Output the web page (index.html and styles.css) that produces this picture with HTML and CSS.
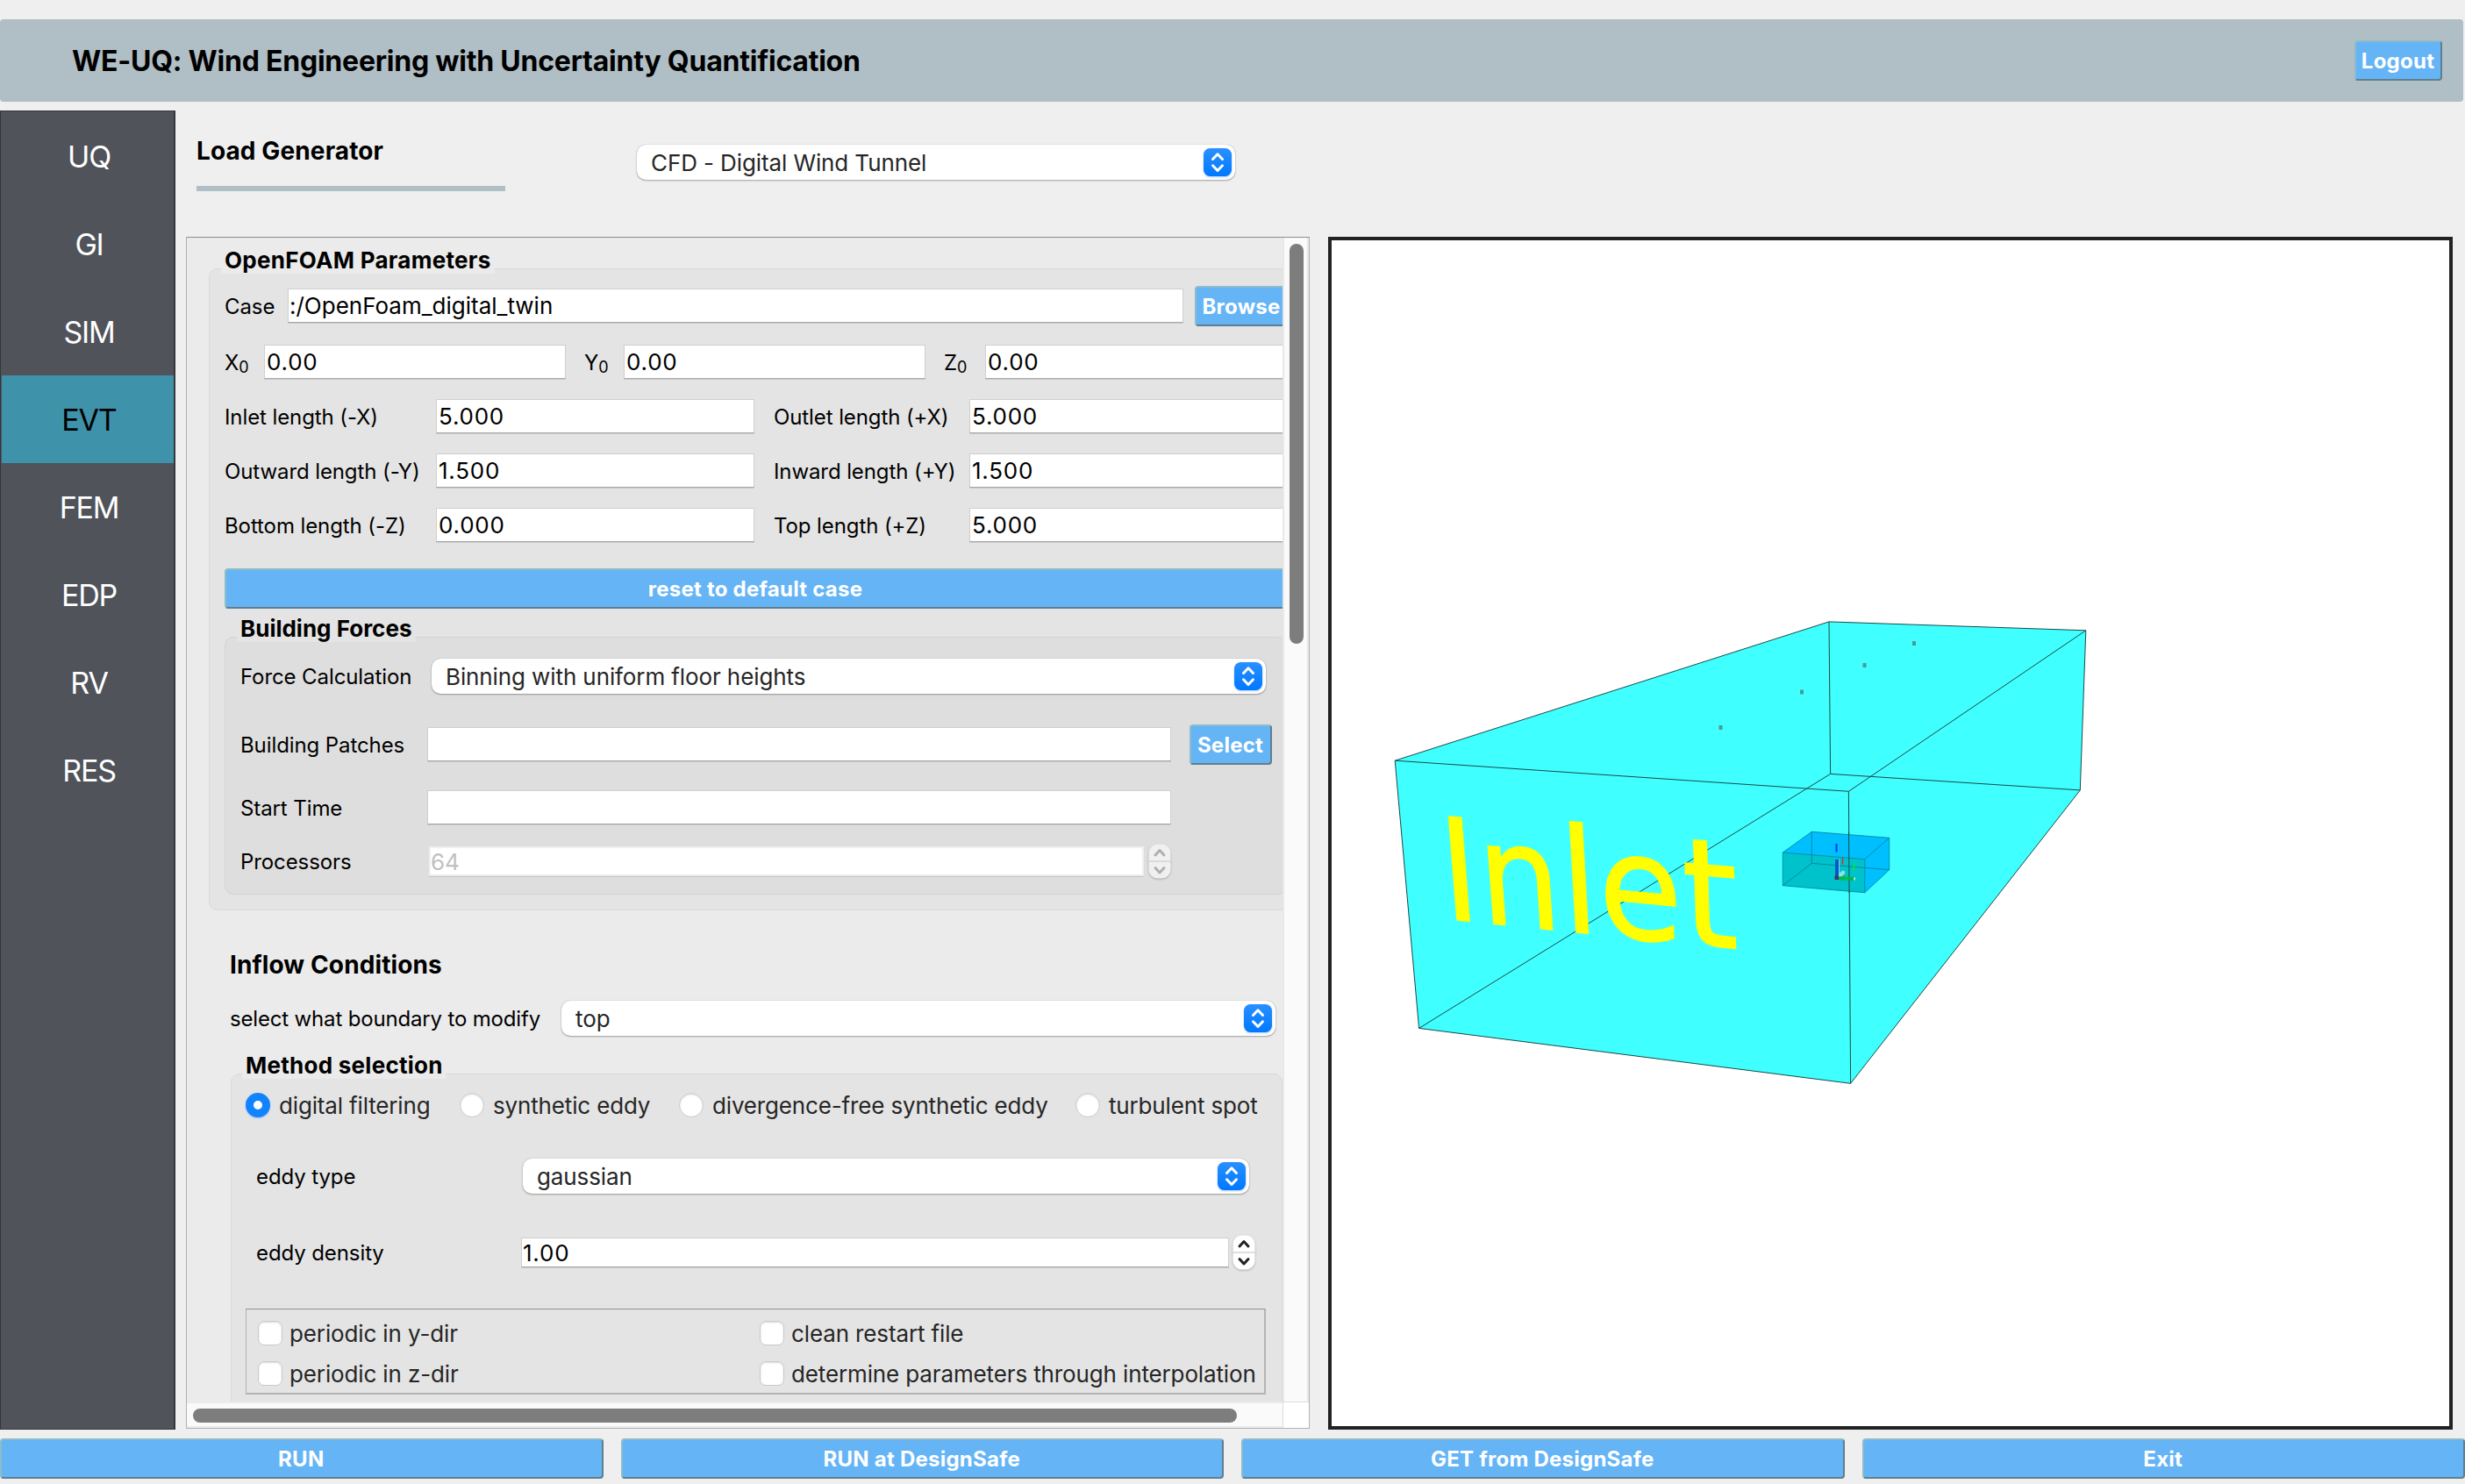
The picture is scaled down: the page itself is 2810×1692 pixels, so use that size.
FILE: index.html
```html
<!DOCTYPE html>
<html lang="en">
<head>
<meta charset="utf-8">
<title>WE-UQ</title>
<link rel="stylesheet" href="styles.css">
</head>
<body>
<svg class="defs" width="0" height="0">
  <defs>
    <linearGradient id="blue" x1="0" y1="0" x2="0" y2="1"><stop offset="0" stop-color="#2a90ff"/><stop offset="1" stop-color="#0078ff"/></linearGradient>
    <symbol id="arrows" viewBox="0 0 32 32">
      <rect width="32" height="32" rx="7.5" fill="url(#blue)"/>
      <path d="M10.5 12.5 16 6.8l5.500 5.700M10.500 19.800 16 25.500l5.500-5.700" fill="none" stroke="#fff" stroke-width="3" stroke-linecap="round" stroke-linejoin="round"/>
    </symbol>
    <symbol id="stepper" viewBox="0 0 26 40">
      <rect x=".5" y=".5" width="25" height="39" rx="10" fill="currentColor"/>
      <path d="M0 20h26" stroke="#d4d4d4" stroke-width="1.500"/>
      <path d="M8 13l5-5.500 5 5.500M8 27.500l5 5.500 5-5.500" fill="none" stroke="var(--arrow)" stroke-width="3" stroke-linecap="round" stroke-linejoin="round"/>
    </symbol>
  </defs>
</svg>

<header class="header">
  <h1>WE-UQ: Wind Engineering with Uncertainty Quantification</h1>
  <button class="btn logout">Logout</button>
</header>

<div class="body">
  <nav class="sidebar">
    <a>UQ</a><a>GI</a><a>SIM</a><a class="active">EVT</a><a>FEM</a><a>EDP</a><a>RV</a><a>RES</a>
  </nav>
  <main class="main">
    <div class="topbar">
      <h2>Load Generator</h2>
      <div class="combo">CFD - Digital Wind Tunnel<svg><use href="#arrows"/></svg></div>
    </div>
    <div class="work">
      <section class="panel">
        <div class="content">
          <div class="group openfoam">
            <h3>OpenFOAM Parameters</h3>
            <div class="row case"><label>Case</label><div class="input">:/OpenFoam_digital_twin</div><button class="btn">Browse</button></div>
            <div class="row origin">
              <label>X<sub>0</sub></label><div class="input num">0.00</div>
              <label>Y<sub>0</sub></label><div class="input num">0.00</div>
              <label>Z<sub>0</sub></label><div class="input num">0.00</div>
            </div>
            <div class="row lengths"><label>Inlet length (-X)</label><div class="input num">5.000</div><label>Outlet length (+X)</label><div class="input num">5.000</div></div>
            <div class="row lengths"><label>Outward length (-Y)</label><div class="input num">1.500</div><label>Inward length (+Y)</label><div class="input num">1.500</div></div>
            <div class="row lengths"><label>Bottom length (-Z)</label><div class="input num">0.000</div><label>Top length (+Z)</label><div class="input num">5.000</div></div>
            <button class="btn reset">reset to default case</button>
            <div class="group forces">
              <h3>Building Forces</h3>
              <div class="row calc"><label>Force Calculation</label><div class="combo">Binning with uniform floor heights<svg><use href="#arrows"/></svg></div></div>
              <div class="row patches"><label>Building Patches</label><div class="input"></div><button class="btn">Select</button></div>
              <div class="row start"><label>Start Time</label><div class="input"></div></div>
              <div class="row procs"><label>Processors</label><div class="input spin disabled">64</div><svg class="stepper off"><use href="#stepper"/></svg></div>
            </div>
          </div>

          <h2 class="inflow">Inflow Conditions</h2>
          <div class="row boundary"><label>select what boundary to modify</label><div class="combo">top<svg><use href="#arrows"/></svg></div></div>

          <div class="group method">
            <h3>Method selection</h3>
            <div class="radios">
              <span class="opt"><i class="radio on"></i>digital filtering</span>
              <span class="opt"><i class="radio"></i>synthetic eddy</span>
              <span class="opt"><i class="radio"></i>divergence-free synthetic eddy</span>
              <span class="opt"><i class="radio"></i>turbulent spot</span>
            </div>
            <div class="row type"><label>eddy type</label><div class="combo">gaussian<svg><use href="#arrows"/></svg></div></div>
            <div class="row density"><label>eddy density</label><div class="input num spin">1.00</div><svg class="stepper"><use href="#stepper"/></svg></div>
            <div class="checks">
              <span class="opt"><i class="check"></i>periodic in y-dir</span>
              <span class="opt"><i class="check"></i>clean restart file</span>
              <span class="opt"><i class="check"></i>periodic in z-dir</span>
              <span class="opt"><i class="check"></i>determine parameters through interpolation</span>
            </div>
          </div>
        </div>
        <div class="vbar"><div class="thumb"></div></div>
        <div class="hbar"><div class="thumb"></div></div>
        <div class="corner"></div>
      </section>

      <section class="view">
        <svg class="scene" viewBox="1518 274 1274 1352">
          <path d="M1590.200 867.200 2085 708.900 2377.800 718.800 2371.300 900.900 2109.600 1235.300 1617.600 1172.400Z" fill="#3fffff"/>
          <g fill="none" stroke="#1c4a4a" stroke-width="1">
            <path d="M1590.200 867.200 2085 708.900 2377.800 718.800 2371.300 900.900 2109.600 1235.300 1617.600 1172.400Z"/>
            <path d="M1590.200 867.200 2107.400 902.300 2109.600 1235.300M2107.400 902.300 2377.800 718.800M2085 708.900 2086.600 882.400 2371.300 900.900M2086.600 882.400 1617.600 1172.400"/>
          </g>
          <g fill="#4a9a9a">
            <path d="M2180 731h4v5h-4zM2123.500 756h4v5h-4zM2052 786.500h4v5h-4zM1959.500 827h4v5h-4z"/>
          </g>
          <path d="M2032.300 972 2065.300 948.300 2153.700 955.300 2153.700 991.700 2125.700 1017.700V979.700Z" fill="#00bfff"/>
          <path d="M2032.300 972 2125.700 979.700V1017.700L2032.300 1009.700Z" fill="#00c2cb"/>
          <path d="M2032.300 972 2065.300 948.300 2153.700 955.300V991.700L2125.700 1017.700 2032.300 1009.700V972L2125.700 979.700V1017.700M2125.700 979.700 2153.700 955.300M2065.300 948.300V984.300L2153.700 991.700M2065.300 984.300 2032.300 1009.700" fill="none" stroke="#007e96" stroke-width="1" opacity=".8"/>
          <path d="M2107.500 948 2108.100 1018" stroke="#1c4a4a" stroke-width="1"/>
          <path d="M2096 999 2101 995" stroke="#8fe0e0" stroke-width="4.500" stroke-linecap="round"/>
          <path d="M2094 980V1000" stroke="#0058c8" stroke-width="4"/>
          <path d="M2096.500 980V998" stroke="#7fd8e6" stroke-width="1"/>
          <path d="M2096 1001.300 2113 1002" stroke="#00b84a" stroke-width="4"/>
          <path d="M2113 1000.500h2v3h-2z" fill="#a0e8e0"/>
          <path d="M2091.500 998.500h4.500v4.500h-4.500z" fill="#45306e"/>
          <path d="M2093.500 962V971.500" stroke="#0030ff" stroke-width="2"/>
          <path d="M2100.500 978V985.500" stroke="#e02828" stroke-width="1.500"/>
          <path d="M2114 984 2113 993" stroke="#00f020" stroke-width="1.500"/>
        </svg>
        <svg class="face" viewBox="0 0 660 386"><text x="59" y="218">Inlet</text></svg>
      </section>
    </div>
  </main>
</div>

<footer class="footer">
  <button class="btn">RUN</button>
  <button class="btn">RUN at DesignSafe</button>
  <button class="btn">GET from DesignSafe</button>
  <button class="btn">Exit</button>
</footer>
</body>
</html>
```
FILE: styles.css
```css
* { box-sizing: border-box; }
body {
  margin: 0; width: 2810px; height: 1692px; overflow: hidden;
  background: #efefef; color: #000;
  font: 26px/1 Inter, "Liberation Sans", sans-serif;
  display: flex; flex-direction: column;
}
.defs { position: absolute; }
h1, h2, h3 { margin: 0; font-weight: 700; white-space: nowrap; }

.btn {
  font: 700 24px/40px Inter, "Liberation Sans", sans-serif; letter-spacing: .01em;
  color: #fff; background: #64b4f6; height: 46px; padding: 2px 1px 0 0; margin: 0;
  border: 2px solid; border-color: #8cbccb #607f8e #607f8e #8cbccb;
  border-radius: 4px; flex: none;
}

/* header */
.header {
  margin-top: 22px; width: 2808px; height: 94px; flex: none;
  background: #b0bec5; border-radius: 4px;
  display: flex; align-items: center; justify-content: space-between;
  padding: 0 24px 0 82px;
}
.header h1 { font-size: 32px; line-height: 40px; padding-top: 2px; letter-spacing: -.007em; }
.logout { width: 100px; }

.body { display: flex; height: 1504px; margin-top: 10px; flex: none; }

/* navigation */
.sidebar {
  width: 200px; background: #50535a; border: 1px solid #34363b;
  border-width: 1px 2px 1px 1px; padding: 1px 0 0 1px;
  display: flex; flex-direction: column;
}
.sidebar a {
  height: 100px; line-height: 102px; font-size: 34px; letter-spacing: -.035em;
  text-align: center; color: #fff; padding-left: 3px;
}
.sidebar .active { background: #3e93aa; color: #000; }

.main { margin-left: 12px; display: flex; flex-direction: column; }
.topbar { height: 144px; display: flex; padding-left: 12px; }
.topbar h2 {
  width: 352px; height: 92px; margin-right: 150px; padding-top: 30px;
  font-size: 28px; line-height: 32px; letter-spacing: .004em; border-bottom: 6px solid #b0bec5;
}
.topbar .combo { width: 682px; margin-top: 39px; }
.work { display: flex; gap: 21px; }

/* scroll panel */
.panel {
  width: 1281px; height: 1359px; background: #ebebeb;
  border: 1px solid #b2b2b2; border-top-color: #8e8e8e;
  display: grid; grid-template: 1327px 30px / 1249px 30px;
}
.content { overflow: hidden; padding: 35px 0 0 25px; min-width: 0; }
.content > * { flex: none; }
.vbar { background: #fafafa; border: solid #e8e8e8; border-width: 0 2px; padding: 7px 0 0 6px; }
.vbar .thumb { width: 16px; height: 456px; border-radius: 8px; background: #7d7d7d; }
.hbar { background: #fafafa; border: solid #ebebeb; border-width: 2px 0; padding: 6px 0 0 7px; }
.hbar .thumb { width: 1190px; height: 16px; border-radius: 8px; background: #7d7d7d; }
.corner { background: #fff; border: solid #dcdcdc; border-width: 1px 0 0 1px; }

.group { border: 1px solid #d9d9d9; border-radius: 10px; background: #e4e4e4; }
.group h3 {
  width: max-content; height: 31px; line-height: 31px; margin: -26px 0 0 13px; padding: 0 4px;
  font-size: 26px; letter-spacing: .006em; background: #ebebeb;
}
.openfoam { width: 1248px; height: 732px; padding: 0 17px; }
.openfoam > h3 { margin-left: -4px; width: 312px; letter-spacing: .011em; }
.forces { margin: 32px 0 0; width: 1211px; height: 294px; background: #dedede; border-color: #d3d3d3; }
.group .forces h3 { background: #e4e4e4; width: 204px; letter-spacing: 0; }

.row { display: flex; align-items: center; height: 40px; }
.row label { font-size: 24px; line-height: 38px; padding-top: 2px; letter-spacing: -.004em; white-space: nowrap; flex: none; }
.input {
  height: 39px; line-height: 38px; background: #fff; padding-left: 2px; white-space: nowrap; flex: none;
  border: 1px solid #cfcfcf; border-bottom-color: #a6a6a6; box-shadow: 0 1px #cbcbcb;
}
.row > .input { margin-bottom: 1px; }
.num { letter-spacing: .03em; }
sub { font-size: 18px; vertical-align: baseline; position: relative; top: 3px; line-height: 0; }

.case { margin-top: 17px; }
.case label { width: 72px; }
.case .input { width: 1021px; margin-right: 13px; padding-left: 1px; }
.case .btn { width: 107px; }
.origin { margin-top: 24px; }
.origin label { width: 45px; }
.origin .input { width: 344px; margin-right: 21px; }
.origin .input:last-child { margin-left: 2px; }
.lengths { margin-top: 22px; }
.lengths label { width: 241px; }
.lengths .input { width: 363px; margin-right: 22px; }
.lengths .input + label { width: 223px; }
.reset { display: block; width: 1211px; margin-top: 29px; }

.forces .row { padding-left: 17px; }
.forces label { width: 213px; }
.calc { margin-top: 19px; }
.forces .calc label { width: 218px; }
.calc .combo { width: 951px; }
.patches { margin-top: 38px; }
.patches .input, .start .input { width: 848px; }
.patches .btn { width: 94px; margin-left: 21px; }
.start { margin-top: 32px; }
.procs { margin-top: 21px; }
.forces .procs label { width: 215px; }
.procs .input { width: 815px; }
.spin { height: 34px; line-height: 33px; }
.disabled { color: #c0c0c0; border: 2px solid #efefef; border-bottom-color: #ebebeb; box-shadow: 0 1px #c4c4c4; padding-left: 0; line-height: 31px; }
.stepper { width: 26px; height: 40px; margin-left: 5px; color: #fff; --arrow: #222; filter: drop-shadow(0 1px 1px rgba(0,0,0,.25)); }
.stepper.off { color: #f0f0f0; --arrow: #b0b0b0; }

/* drop-down */
.combo {
  height: 40px; line-height: 42px; border-radius: 10px; background: #fff; color: #262626;
  box-shadow: 0 0 1px rgba(0,0,0,.35), 0 1px 2px rgba(0,0,0,.3);
  padding: 0 4px 0 16px; letter-spacing: -.004em; white-space: nowrap;
  display: flex; align-items: flex-start; justify-content: space-between; flex: none;
}
.combo svg { width: 32px; height: 32px; margin-top: 4px; filter: drop-shadow(0 1px 1px rgba(0,100,255,.3)); }

.inflow { margin: 45px 0 23px 24px; font-size: 28px; line-height: 35px; letter-spacing: .004em; }
.boundary { padding-left: 24px; }
.row.boundary label { width: 378px; letter-spacing: -.007em; }
.boundary .combo { width: 814px; }

.method { margin: 43px 0 0 25px; width: 1199px; height: 520px; padding-left: 16px; }
.method h3 { margin-left: -4px; width: 232px; letter-spacing: .01em; }
.radios { display: grid; grid-template-columns: 244px 250px 452px auto; margin-top: 16px; }
.opt { display: flex; align-items: flex-start; height: 28px; line-height: 30px; color: #262626; letter-spacing: -.005em; white-space: nowrap; }
.radios .opt { letter-spacing: -.006em; }
.radio { width: 28px; height: 28px; margin-right: 10px; border-radius: 50%; background: #fff; border: 1px solid #cbcbcb; box-shadow: inset 0 1px 2px rgba(0,0,0,.15); flex: none; }
.radio.on { border: 9px solid #1283ff; box-shadow: 0 1px 2px rgba(0,100,255,.3); }
.type { margin-top: 47px; padding-left: 12px; }
.type label { width: 304px; }
.type .combo { width: 828px; }
.density { margin-top: 47px; padding-left: 12px; }
.density label { width: 302px; }
.density .input { width: 807px; padding-left: 1px; }
.density .stepper { margin-left: 4px; }
.checks {
  margin-top: 44px; width: 1163px; height: 98px; padding: 13px 0 0 13px;
  border: 1px solid #8e8e8e; border-left-color: #b0b0b0; border-right: 2px solid #b4b4b4; border-bottom: 2px solid #b4b4b4;
  display: grid; grid-template-columns: 572px auto; align-content: start; row-gap: 18px;
}
.check { width: 28px; height: 28px; margin-right: 8px; border-radius: 7px; background: #fff; border: 1px solid #cbcbcb; box-shadow: inset 0 1px 2px rgba(0,0,0,.15); flex: none; }

/* 3D view */
.view { width: 1282px; height: 1360px; border: 4px solid #222; background: #fff; position: relative; }
.scene { display: block; width: 1274px; height: 1352px; }
.face {
  position: absolute; left: 0; top: 0; width: 660px; height: 386px; transform-origin: 0 0;
  transform: matrix3d(.7003, -.03558, 0, -.00014127, .0842, .91075, 0, .00013378, 0, 0, 1, 0, 72.2, 593.2, 0, 1);
}
.face text { font: 200px "DejaVu Sans", sans-serif; letter-spacing: 1px; fill: #ff0; stroke: #ff0; stroke-width: 2; }

.footer { margin-top: 10px; display: flex; gap: 20px; }
.footer .btn { flex: 1; }
```
